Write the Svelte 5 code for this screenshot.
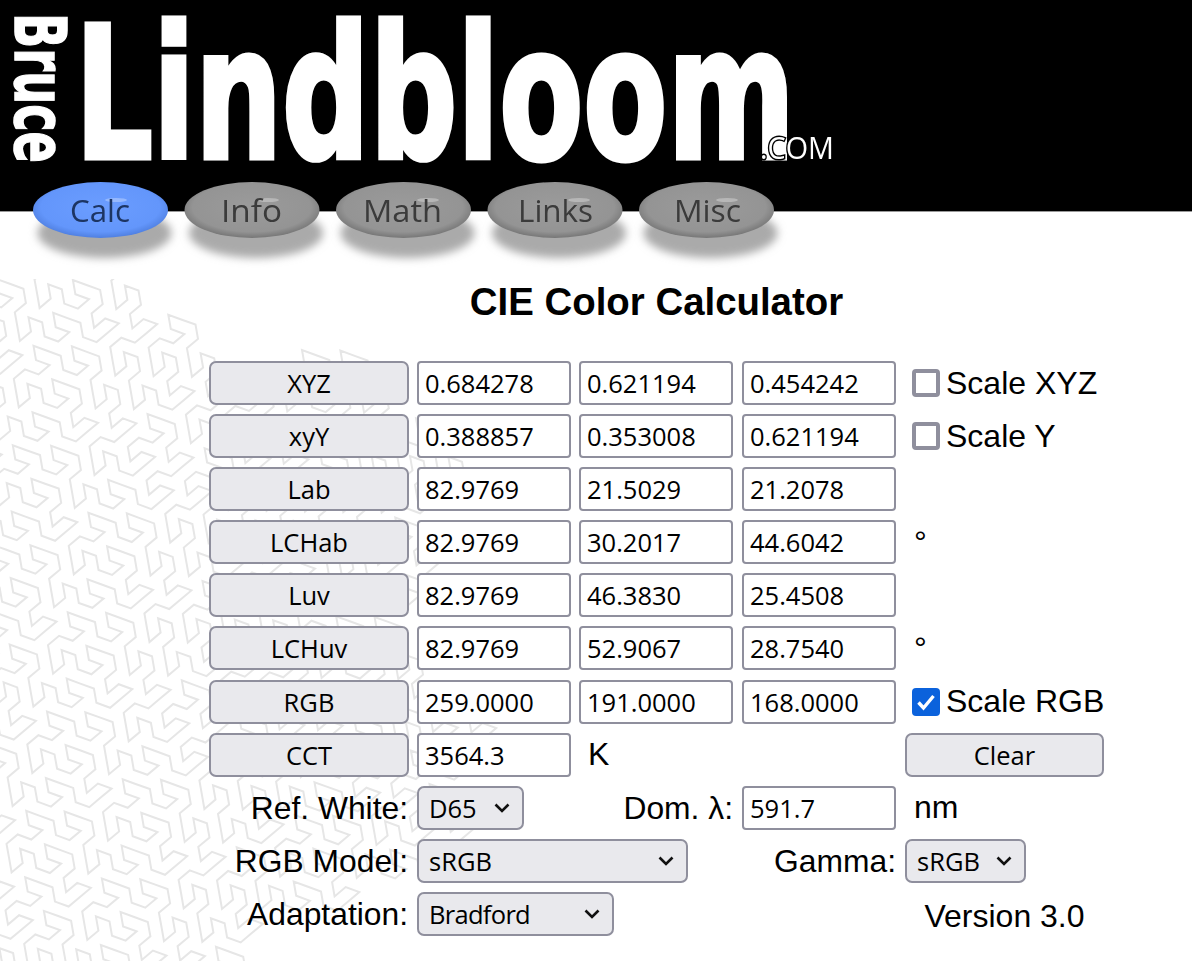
<script>
  // bouton de navigation du logo
  const nav = [
    { name: 'Calc', cx: 100.5, x: 70, w: 60, on: true },
    { name: 'Info', cx: 252, x: 221, w: 61 },
    { name: 'Math', cx: 403.5, x: 363, w: 79 },
    { name: 'Links', cx: 555, x: 518, w: 75 },
    { name: 'Misc', cx: 706.5, x: 674, w: 67 }
  ];

  const rows = [
    { name: 'XYZ', v: ['0.684278', '0.621194', '0.454242'], check: 'Scale XYZ' },
    { name: 'xyY', v: ['0.388857', '0.353008', '0.621194'], check: 'Scale Y' },
    { name: 'Lab', v: ['82.9769', '21.5029', '21.2078'] },
    { name: 'LCHab', v: ['82.9769', '30.2017', '44.6042'], deg: true },
    { name: 'Luv', v: ['82.9769', '46.3830', '25.4508'] },
    { name: 'LCHuv', v: ['82.9769', '52.9067', '28.7540'], deg: true },
    { name: 'RGB', v: ['259.0000', '191.0000', '168.0000'], check: 'Scale RGB', checked: true }
  ];

  // courbe de Gosper pour le fond
  function gosper(order, len, startDeg, cx, cy) {
    let s = 'A';
    for (let i = 0; i < order; i++) {
      s = s.replace(/[AB]/g, (c) => (c === 'A' ? 'A-B--B+A++AA+B-' : '+A-BB--B-A++A+B'));
    }
    let a = startDeg, x = 0, y = 0;
    const pts = [[0, 0]];
    for (const c of s) {
      if (c === '+') a += 60;
      else if (c === '-') a -= 60;
      else {
        x += len * Math.cos((a * Math.PI) / 180);
        y += len * Math.sin((a * Math.PI) / 180);
        pts.push([x, y]);
      }
    }
    const xs = pts.map((p) => p[0]), ys = pts.map((p) => p[1]);
    const dx = cx - (Math.min(...xs) + Math.max(...xs)) / 2;
    const dy = cy - (Math.min(...ys) + Math.max(...ys)) / 2;
    return 'M' + pts.map((p) => (p[0] + dx).toFixed(1) + ' ' + (p[1] + dy).toFixed(1)).join('L');
  }

  const curve = gosper(4, 14.5, 20, 100, 660);
</script>

<main>
  <svg class="backdrop" viewBox="0 0 1192 682" width="1192" height="682" aria-hidden="true">
    <g transform="translate(0 -279)">
      <path d={curve} />
    </g>
  </svg>

  <svg class="banner" viewBox="0 0 1192 280" width="1192" height="280">
    <defs>
      <radialGradient id="blue" cx="50%" cy="45%" r="55%">
        <stop offset="0" stop-color="#6b9dff" />
        <stop offset="0.8" stop-color="#6396fb" />
        <stop offset="1" stop-color="#4f7fe0" />
      </radialGradient>
      <radialGradient id="grey" cx="50%" cy="45%" r="55%">
        <stop offset="0" stop-color="#9b9b9b" />
        <stop offset="0.8" stop-color="#949494" />
        <stop offset="1" stop-color="#767676" />
      </radialGradient>
      <filter id="soft" x="-20%" y="-40%" width="140%" height="180%"><feGaussianBlur stdDeviation="4.5" /></filter>
      <filter id="tiny"><feGaussianBlur stdDeviation="0.6" /></filter>
    </defs>
    {#each nav as n}
      <ellipse cx={n.cx + 4} cy="233" rx="67" ry="25" fill="#aaa" filter="url(#soft)" />
    {/each}
    <rect width="1192" height="211" fill="#000" />
    <rect y="211" width="1192" height="1" fill="#999" />
    <g filter="url(#tiny)">
      <text class="logo big" x="75" y="158" textLength="720" lengthAdjust="spacingAndGlyphs">Lindbloom</text>
      <text class="logo small" transform="translate(15 13) rotate(90)" textLength="150" lengthAdjust="spacingAndGlyphs">Bruce</text>
      <text class="dotcom" x="760" y="159" textLength="74" lengthAdjust="spacingAndGlyphs">.COM</text>
    </g>
    {#each nav as n}
      <ellipse cx={n.cx} cy="210" rx="67.5" ry="28" fill={n.on ? 'url(#blue)' : 'url(#grey)'} />
      <ellipse cx={n.x + n.w - 14} cy="200" rx="11" ry="2" fill="#fff" opacity="0.3" filter="url(#tiny)" />
      <text class="tab" class:on={n.on} x={n.x} y="222" textLength={n.w} lengthAdjust="spacingAndGlyphs" filter="url(#tiny)">{n.name}</text>
    {/each}
  </svg>

  <h1>CIE Color Calculator</h1>

  <form class="calc">
    {#each rows as r}
      <button type="button">{r.name}</button>
      {#each r.v as val}
        <input type="text" value={val} />
      {/each}
      {#if r.check}
        <label class="check">
          <input type="checkbox" checked={r.checked} />
          <span class="box" class:checked={r.checked}>
            {#if r.checked}
              <svg viewBox="0 0 28 28" width="28" height="28"><path d="M6.5 14.5l5 5.5 10-12" fill="none" stroke="#fff" stroke-width="3.4" /></svg>
            {/if}
          </span>
          {r.check}
        </label>
      {:else if r.deg}
        <span class="unit">°</span>
      {:else}
        <span></span>
      {/if}
    {/each}

    <button type="button">CCT</button>
    <input type="text" value="3564.3" />
    <span class="unit">K</span>
    <span></span>
    <button type="button">Clear</button>

    <span class="lbl">Ref. White:</span>
    <select class="w-d65"><option>D65</option></select>
    <span class="lbl">Dom. λ:</span>
    <input type="text" value="591.7" />
    <span class="unit">nm</span>

    <span class="lbl">RGB Model:</span>
    <select class="w-model"><option>sRGB</option></select>
    <span class="lbl">Gamma:</span>
    <select class="w-gamma"><option>sRGB</option></select>

    <span class="lbl">Adaptation:</span>
    <select class="w-adapt"><option>Bradford</option></select>
    <span></span>
    <span class="version">Version 3.0</span>
  </form>
</main>

<style>
  :global(body) {
    margin: 0;
    background: #fff;
  }
  main {
    position: relative;
    width: 1192px;
    height: 961px;
    overflow: hidden;
    font-family: "Liberation Sans", Arial, sans-serif;
    color: #000;
  }

  /* fond */
  .backdrop {
    position: absolute;
    left: 0;
    top: 279px;
  }
  .backdrop path {
    fill: none;
    stroke: #e6e6e6;
    stroke-width: 2;
  }

  /* bandeau */
  .banner {
    display: block;
    position: relative;
  }
  .logo {
    font-family: "DejaVu Sans", sans-serif;
    font-weight: 700;
    fill: #fff;
  }
  .big {
    font-size: 184px;
    stroke: #fff;
    stroke-width: 5px;
  }
  .small {
    font-size: 72px;
    stroke: #fff;
    stroke-width: 1.5px;
  }
  .dotcom {
    font-family: "Open Sans", sans-serif;
    font-size: 31px;
    fill: #fff;
    stroke: #000;
    stroke-width: 3px;
    paint-order: stroke;
  }
  .tab {
    font-family: "Open Sans", sans-serif;
    font-size: 31px;
    fill: #3a3a3a;
  }
  .tab.on {
    fill: #1f3563;
  }

  h1 {
    position: relative;
    margin: 0;
    padding: 0 0 37px 209px;
    width: 895px;
    height: 44px;
    line-height: 44px;
    font-size: 38.4px;
    font-weight: 700;
    text-align: center;
  }

  /* formulaire */
  .calc {
    position: relative;
    display: grid;
    grid-template-columns: 200px 154px 155px 155px 199px;
    grid-auto-rows: 44px;
    column-gap: 8px;
    row-gap: 9.1px;
    align-items: center;
    justify-items: stretch;
    margin-left: 209px;
    width: 895px;
    font-size: 32px;
  }
  button, input[type="text"], select {
    box-sizing: border-box;
    height: 44px;
    margin: 0;
    border: 2px solid #8f8f9d;
    color: #000;
    font-family: "Open Sans", sans-serif;
    font-size: 25.5px;
  }
  button {
    padding: 0;
    background: #e9e9ed;
    border-radius: 7px;
  }
  input[type="text"] {
    width: 154px;
    padding: 0 6px;
    background: #fff;
    border-radius: 4px;
    outline: none;
  }
  select {
    appearance: none;
    justify-self: start;
    padding: 0 0 0 10px;
    border-radius: 7px;
    background-color: #e9e9ed;
    background-image: url("data:image/svg+xml,%3Csvg xmlns='http://www.w3.org/2000/svg' width='16' height='10'%3E%3Cpath d='M1.5 1.5L8 8l6.5-6.5' fill='none' stroke='%23111' stroke-width='2.6'/%3E%3C/svg%3E");
    background-repeat: no-repeat;
    background-position: right 12px center;
  }
  .w-d65 { width: 107px; }
  .w-gamma { width: 121px; }
  .w-model { width: 271px; grid-column: span 2; }
  .w-adapt { width: 197px; grid-column: span 2; letter-spacing: -0.7px; }

  .lbl {
    justify-self: end;
    padding: 1px 1px 0 0;
    font-size: 31.8px;
    white-space: nowrap;
  }
  .unit {
    padding-left: 9px;
  }
  .version {
    justify-self: center;
    padding-top: 6px;
    font-size: 32px;
  }
  .check {
    display: flex;
    align-items: center;
    gap: 6px;
    padding-left: 7px;
    white-space: nowrap;
  }
  .check input {
    display: none;
  }
  .box {
    box-sizing: border-box;
    display: block;
    width: 28px;
    height: 28px;
    border: 4px solid #8f8f9d;
    border-radius: 4px;
    background: #fff;
  }
  .box.checked {
    border: none;
    background: #0b62dc;
  }
  .box svg {
    display: block;
  }
</style>
